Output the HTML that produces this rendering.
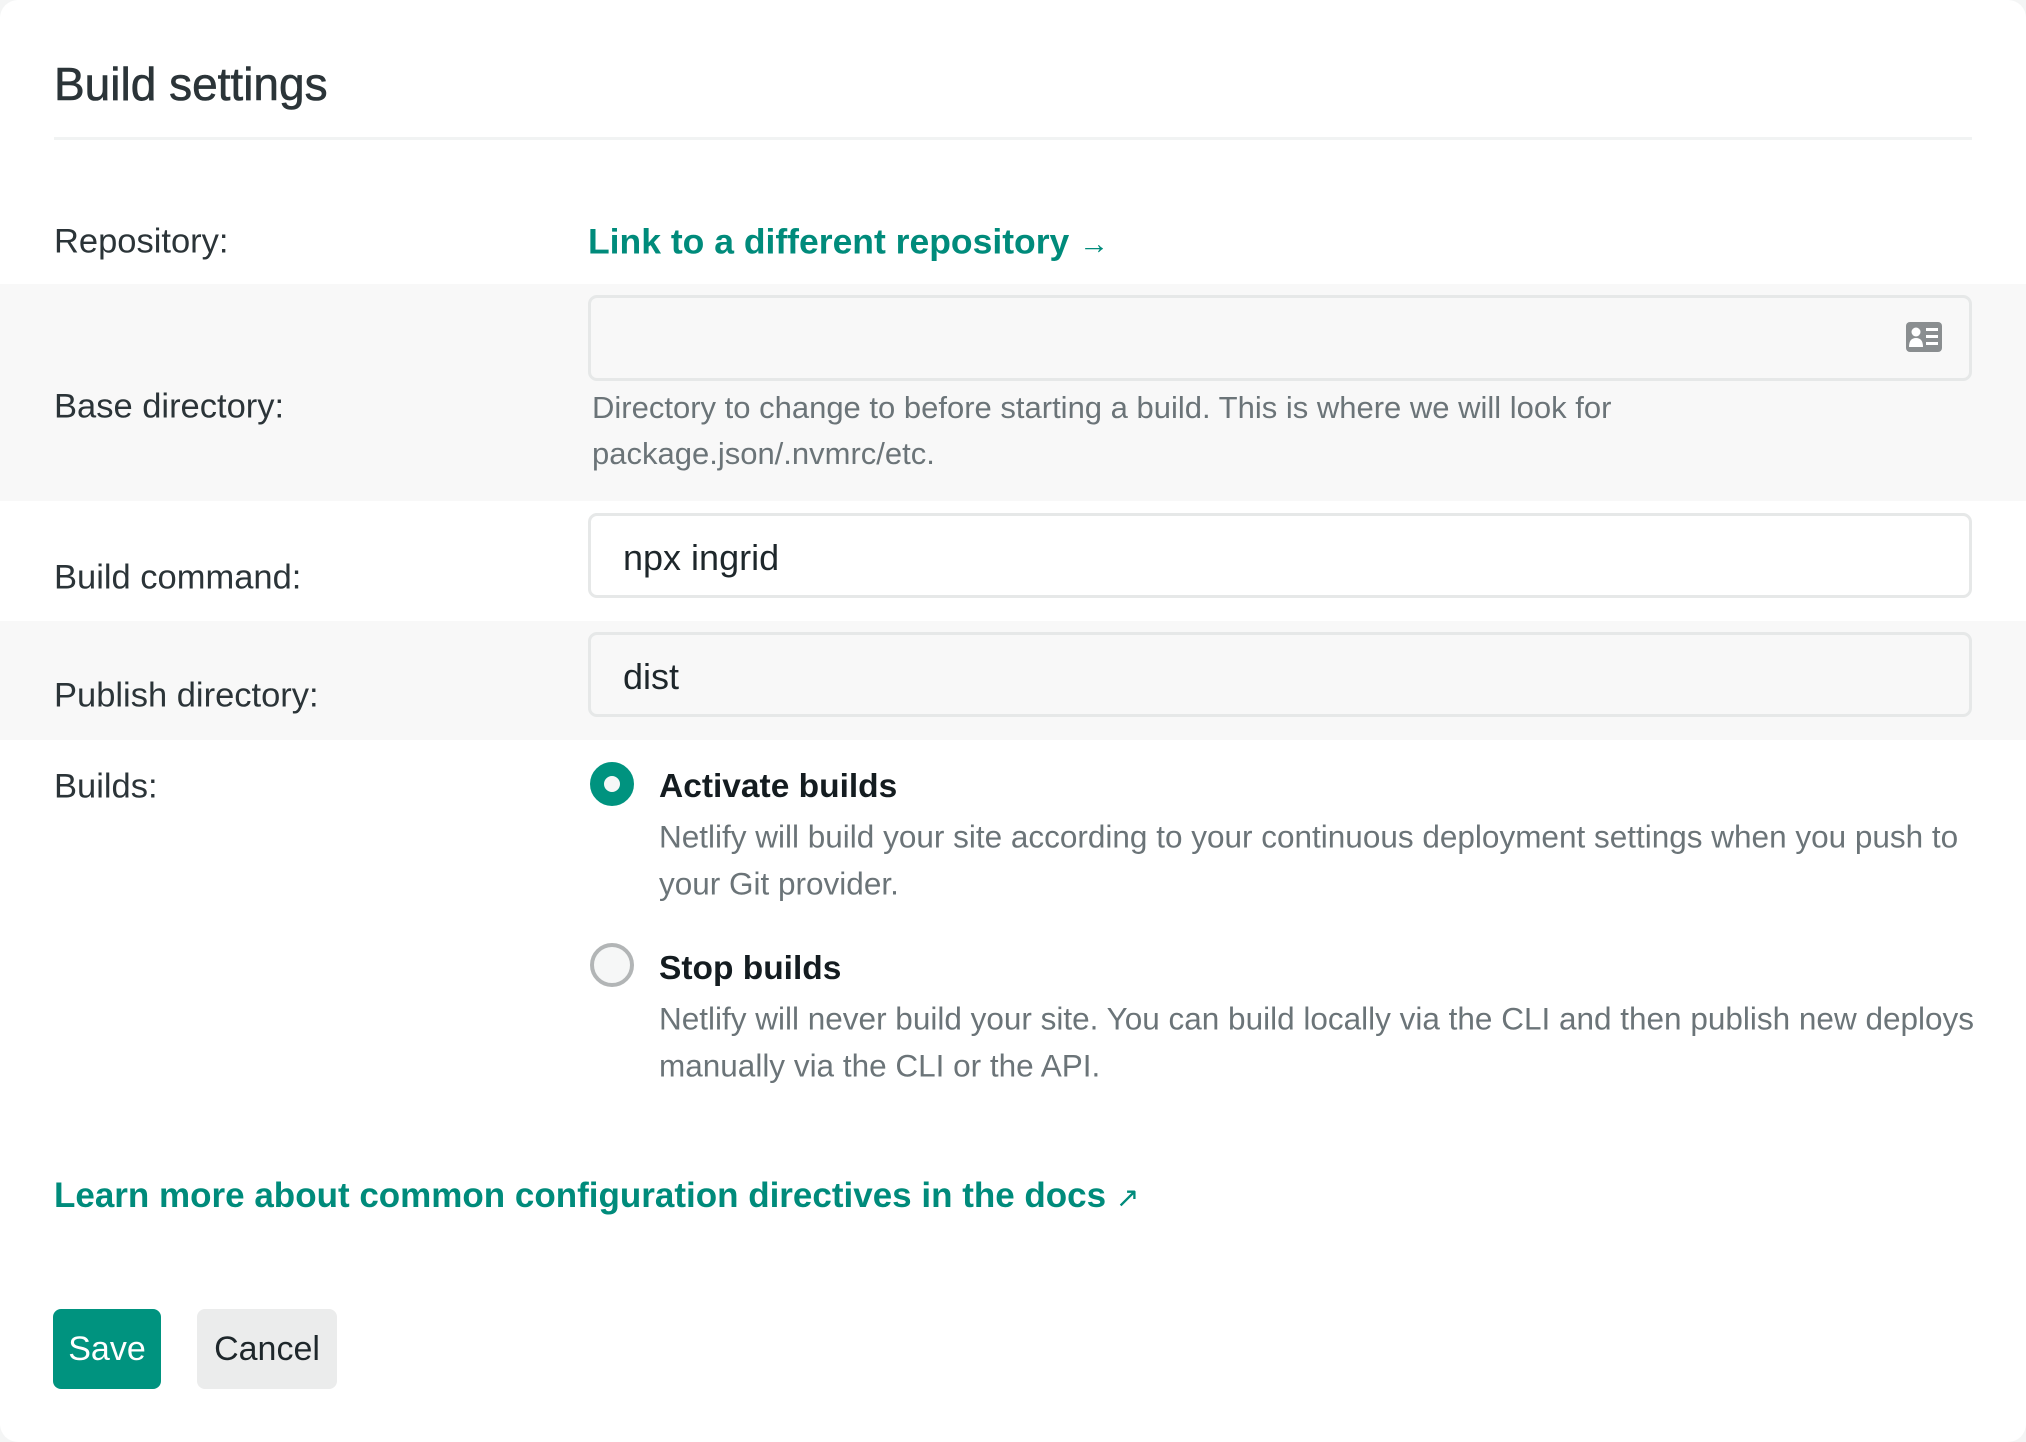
<!DOCTYPE html>
<html><head><meta charset="utf-8"><style>
*{margin:0;padding:0;box-sizing:border-box}
body{width:2026px;height:1442px;background:#f4f5f5;font-family:"Liberation Sans",sans-serif;position:relative;overflow:hidden}
.card{position:absolute;left:0;top:0;width:2026px;height:1442px;background:#fff;border-radius:18px}
.a{position:absolute;white-space:nowrap}
.band{position:absolute;left:0;width:2026px;background:#f8f8f8}
.lbl{font-size:34.5px;color:#2b3438;transform:translateY(-50%)}
.inp{position:absolute;left:588px;width:1384px;border:3px solid #e6e8e8;border-radius:9px}
.help{font-size:31px;color:#6b7478;transform:translateY(-50%)}
.desc{font-size:31.5px;color:#6b7478;transform:translateY(-50%)}
.teal{color:#008b7b;font-weight:bold}
</style></head><body><div class="card">
<div class="a" style="left:54px;top:84px;font-size:46px;color:#2b3438;transform:translateY(-50%);-webkit-text-stroke:0.6px #2b3438">Build settings</div>
<div class="a" style="left:54px;top:137px;width:1918px;height:3px;background:#f1f3f3"></div>

<div class="a lbl" style="left:54px;top:242px">Repository:</div>
<div class="a teal" style="left:588px;top:242px;font-size:35.5px;transform:translateY(-50%)">Link to a different repository <span style="font-weight:normal;font-size:30px">→</span></div>

<div class="band" style="top:284px;height:217px"></div>
<div class="inp" style="top:295px;height:86px;background:#f8f8f8"></div>
<svg class="a" style="left:1906px;top:322px" width="36" height="30" viewBox="0 0 36 30"><rect x="0" y="0" width="36" height="30" rx="4" fill="#8a8e90"/><circle cx="10" cy="10" r="4.5" fill="#fff"/><path d="M3 25 Q3 16 10 16 Q17 16 17 25 Z" fill="#fff"/><rect x="20" y="6" width="12" height="3" fill="#fff"/><rect x="20" y="13" width="12" height="3" fill="#fff"/><rect x="20" y="20" width="12" height="3" fill="#fff"/></svg>
<div class="a lbl" style="left:54px;top:407px">Base directory:</div>
<div class="a help" style="left:592px;top:408px">Directory to change to before starting a build. This is where we will look for</div>
<div class="a help" style="left:592px;top:454px">package.json/.nvmrc/etc.</div>

<div class="inp" style="top:513px;height:85px;background:#fff"></div>
<div class="a lbl" style="left:54px;top:578px">Build command:</div>
<div class="a" style="left:623px;top:558px;font-size:36px;color:#1e272b;transform:translateY(-50%)">npx ingrid</div>

<div class="band" style="top:621px;height:119px"></div>
<div class="inp" style="top:632px;height:85px;background:#f8f8f8"></div>
<div class="a lbl" style="left:54px;top:696px">Publish directory:</div>
<div class="a" style="left:623px;top:677px;font-size:36px;color:#1e272b;transform:translateY(-50%)">dist</div>

<div class="a lbl" style="left:54px;top:787px">Builds:</div>
<div class="a" style="left:590px;top:762px;width:44px;height:44px;border-radius:50%;border:14px solid #00937f;background:#f6f7f7"></div>
<div class="a" style="left:659px;top:787px;font-size:33.5px;font-weight:bold;color:#141c20;transform:translateY(-50%)">Activate builds</div>
<div class="a desc" style="left:659px;top:837px">Netlify will build your site according to your continuous deployment settings when you push to</div>
<div class="a desc" style="left:659px;top:884px">your Git provider.</div>

<div class="a" style="left:590px;top:943px;width:44px;height:44px;border-radius:50%;border:4px solid #b2b5b6;background:#f6f7f7"></div>
<div class="a" style="left:659px;top:969px;font-size:33.5px;font-weight:bold;color:#141c20;transform:translateY(-50%)">Stop builds</div>
<div class="a desc" style="left:659px;top:1019px">Netlify will never build your site. You can build locally via the CLI and then publish new deploys</div>
<div class="a desc" style="left:659px;top:1066px">manually via the CLI or the API.</div>

<div class="a teal" style="left:54px;top:1196px;font-size:35px;transform:translateY(-50%)">Learn more about common configuration directives in the docs <span style="font-weight:normal;font-size:28px">↗</span></div>

<div class="a" style="left:53px;top:1309px;width:108px;height:80px;background:#00937f;border-radius:8px;color:#fff;font-size:34px;line-height:80px;text-align:center">Save</div>
<div class="a" style="left:197px;top:1309px;width:140px;height:80px;background:#ebecec;border-radius:8px;color:#1e272b;font-size:34px;line-height:80px;text-align:center">Cancel</div>
</div></body></html>
